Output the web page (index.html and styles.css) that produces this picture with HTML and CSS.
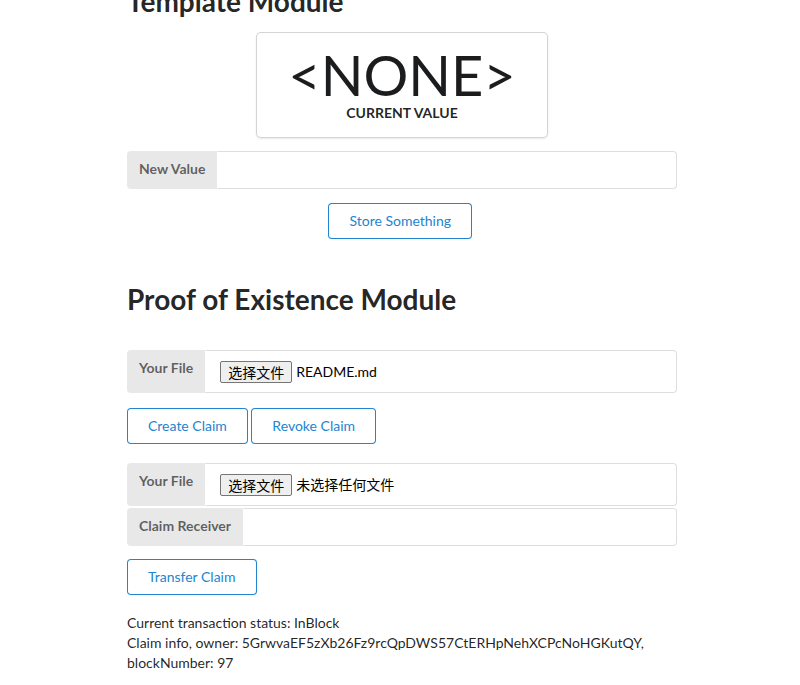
FILE: index.html
```html
<!DOCTYPE html>
<html lang="zh-CN">
<head>
<meta charset="utf-8">
<title>Substrate Front End</title>
<link rel="stylesheet" href="styles.css">
</head>
<body>
<div class="page">
  <h1 class="heading">Template Module</h1>
  <div class="card">
    <div class="card-content">
      <div class="statistic">
        <div class="stat-value">&lt;NONE&gt;</div>
        <div class="stat-label">Current Value</div>
      </div>
    </div>
  </div>
  <div class="field">
    <div class="labeled-input">
      <div class="input-label">New Value</div>
      <input class="text-input" type="text">
    </div>
  </div>
  <div class="center-row">
    <button class="basic-btn" type="button">Store Something</button>
  </div>

  <h1 class="heading section-heading">Proof of Existence Module</h1>

  <div class="labeled-input file-row">
    <div class="input-label">Your File</div>
    <div class="file-input"><span class="file-btn">选择文件</span><span class="file-name">README.md</span></div>
  </div>
  <div class="btn-row">
    <button class="basic-btn" type="button">Create Claim</button>
    <button class="basic-btn" type="button">Revoke Claim</button>
  </div>

  <div class="labeled-input file-row tight">
    <div class="input-label">Your File</div>
    <div class="file-input"><span class="file-btn">选择文件</span><span class="file-name">未选择任何文件</span></div>
  </div>
  <div class="labeled-input receiver-row">
    <div class="input-label">Claim Receiver</div>
    <input class="text-input" type="text">
  </div>
  <div class="btn-row transfer-row">
    <button class="basic-btn" type="button">Transfer Claim</button>
  </div>

  <div class="status">
    <div>Current transaction status: InBlock</div>
    <div>Claim info, owner: 5GrwvaEF5zXb26Fz9rcQpDWS57CtERHpNehXCPcNoHGKutQY, blockNumber: 97</div>
  </div>
</div>
</body>
</html>
```

FILE: styles.css
```css
html, body {
  margin: 0;
  padding: 0;
  background: #ffffff;
}
body {
  font-family: Lato, "Noto Sans CJK SC", sans-serif;
  font-size: 14px;
  line-height: 20px;
  color: rgba(0, 0, 0, 0.87);
  overflow: hidden;
}
.page {
  width: 550px;
  margin: -17px 0 0 127px;
}
.heading {
  font-family: Lato, sans-serif;
  font-size: 28px;
  font-weight: 700;
  line-height: 36px;
  margin: 0 0 14px;
  color: rgba(0, 0, 0, 0.87);
}
.section-heading {
  margin-top: 42px;
  margin-bottom: 33px;
}
.card {
  width: 290px;
  margin: 0 auto 14px;
  border-radius: 4px;
  background: #fff;
  box-shadow: 0 1px 3px 0 #d4d4d5, 0 0 0 1px #d4d4d5;
}
.card-content {
  padding: 14px;
  text-align: center;
}
.statistic {
  display: flex;
  flex-direction: column;
  align-items: center;
}
.stat-value {
  font-family: Lato, sans-serif;
  font-size: 56px;
  font-weight: 400;
  line-height: 56px;
  color: #1b1c1d;
}
.stat-label {
  font-weight: 700;
  font-size: 14px;
  line-height: 20px;
  text-transform: uppercase;
  color: rgba(0, 0, 0, 0.87);
}
.field {
  margin-bottom: 14px;
}
.labeled-input {
  display: flex;
  align-items: stretch;
}
.input-label {
  flex: 0 0 auto;
  background: #e8e8e8;
  color: rgba(0, 0, 0, 0.6);
  font-weight: 700;
  font-size: 14px;
  line-height: 14px;
  padding: 11px 12px;
  border-radius: 4px 0 0 4px;
}
.text-input {
  flex: 1 1 auto;
  min-width: 0;
  margin: 0;
  font-family: Lato, sans-serif;
  font-size: 14px;
  line-height: 17px;
  padding: 9.5px 14px;
  border: 1px solid rgba(34, 36, 38, 0.15);
  border-left-color: transparent;
  border-radius: 0 4px 4px 0;
  outline: none;
  color: rgba(0, 0, 0, 0.87);
  background: #fff;
}
.file-input {
  flex: 1 1 auto;
  display: flex;
  align-items: center;
  padding: 9.5px 14px;
  border: 1px solid rgba(34, 36, 38, 0.15);
  border-left-color: transparent;
  border-radius: 0 4px 4px 0;
  font-family: Lato, "Noto Sans CJK SC", sans-serif;
  font-size: 14px;
  line-height: 20px;
  color: rgba(0, 0, 0, 0.87);
}
.file-btn {
  font-family: "Noto Sans CJK SC", sans-serif;
  font-size: 14px;
  line-height: 18px;
  padding: 1px 7px;
  background: #efefef;
  border: 1px solid #767676;
  border-radius: 2px;
  color: #000;
  margin-right: 4px;
}
.file-name {
  color: #000;
}
.file-row {
  margin-bottom: 15px;
}
.file-row.tight {
  margin-bottom: 2px;
}
.receiver-row {
  margin-bottom: 13px;
}
.center-row {
  text-align: center;
}
.btn-row {
  display: flex;
  margin-bottom: 19px;
}
.transfer-row {
  margin-bottom: 18px;
}
.basic-btn {
  font-family: Lato, sans-serif;
  font-size: 14px;
  font-weight: 400;
  line-height: 14px;
  padding: 11px 21px;
  margin: 0 3.5px 0 0;
  background: #fff;
  color: #2185d0;
  border: none;
  border-radius: 4px;
  box-shadow: inset 0 0 0 1px #2185d0;
  cursor: pointer;
}
.status {
  line-height: 20px;
}
```
